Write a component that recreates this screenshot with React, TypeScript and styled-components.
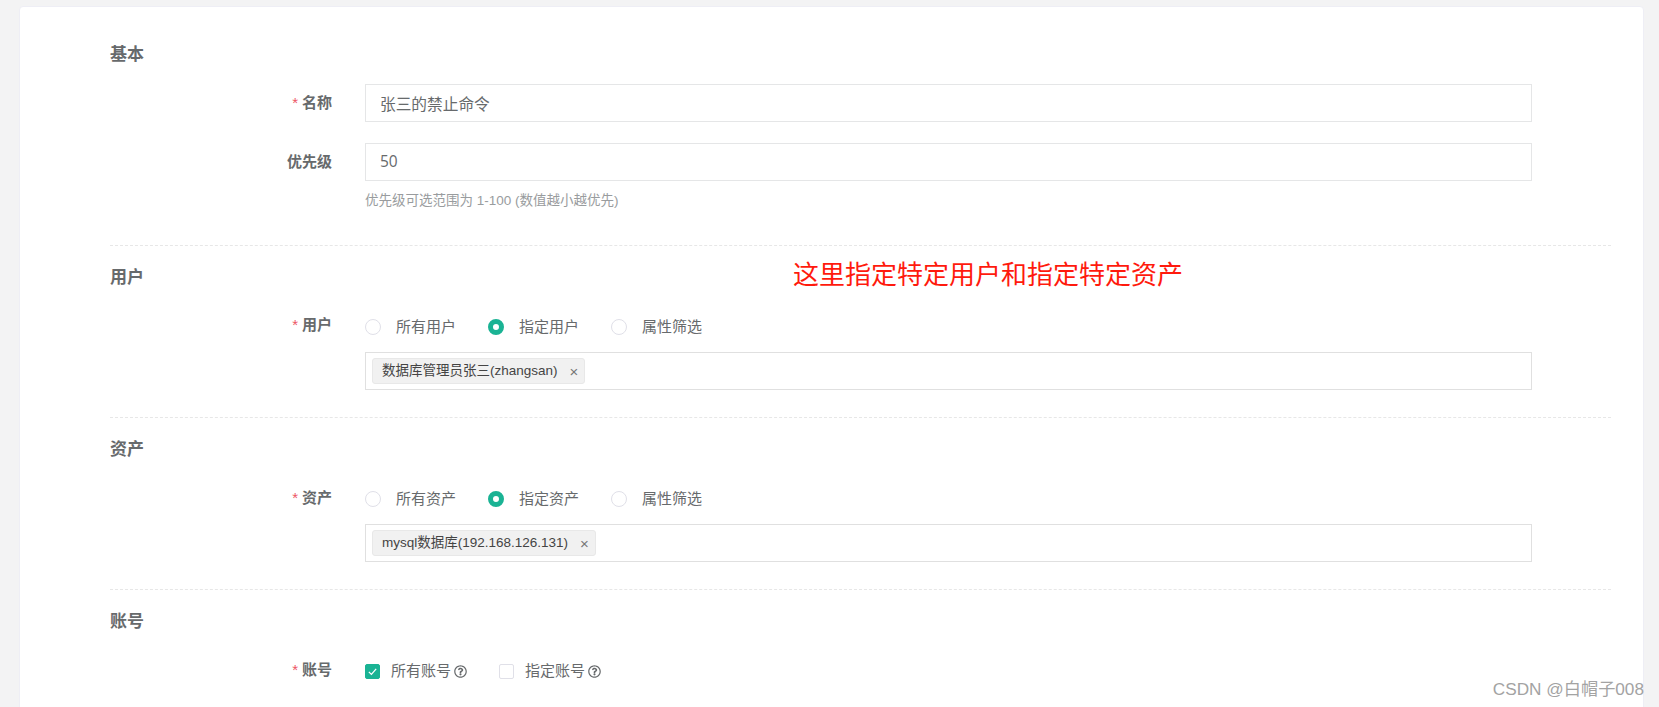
import React from "react";
import styled, { createGlobalStyle } from "styled-components";
import { FaRegQuestionCircle } from "react-icons/fa";

const GlobalStyle = createGlobalStyle`
  html, body {
    margin: 0;
    height: 707px;
    overflow: hidden;
    background: #f3f3f4;
    font-family: "Liberation Sans", "Noto Sans CJK SC", sans-serif;
  }
`;

const App = () => {
  return (
    <Page>
      <GlobalStyle />
      <Card>
        <Section>
          <SectionTitle>基本</SectionTitle>
          <Row>
            <Label>
              <Star>*</Star>名称
            </Label>
            <Input>张三的禁止命令</Input>
          </Row>
          <Row $gap>
            <Label>优先级</Label>
            <Input $latin>50</Input>
          </Row>
          <Row>
            <span />
            <Help>优先级可选范围为 1-100 (数值越小越优先)</Help>
          </Row>
        </Section>

        <Section>
          <SectionTitle>用户</SectionTitle>
          <Row>
            <Label $lift={3}>
              <Star>*</Star>用户
            </Label>
            <Options>
              <Radio>所有用户</Radio>
              <Radio $checked>指定用户</Radio>
              <Radio>属性筛选</Radio>
            </Options>
          </Row>
          <Row>
            <span />
            <TagInput>
              <Tag>
                数据库管理员张三(zhangsan)<TagClose>×</TagClose>
              </Tag>
            </TagInput>
          </Row>
        </Section>

        <Section>
          <SectionTitle>资产</SectionTitle>
          <Row>
            <Label $lift={2}>
              <Star>*</Star>资产
            </Label>
            <Options>
              <Radio>所有资产</Radio>
              <Radio $checked>指定资产</Radio>
              <Radio>属性筛选</Radio>
            </Options>
          </Row>
          <Row>
            <span />
            <TagInput>
              <Tag>
                mysql数据库(192.168.126.131)<TagClose>×</TagClose>
              </Tag>
            </TagInput>
          </Row>
        </Section>

        <LastSection>
          <SectionTitle>账号</SectionTitle>
          <Row>
            <Label $lift={2}>
              <Star>*</Star>账号
            </Label>
            <Options>
              <CheckItem>
                <CheckBox $checked>
                  <svg width="11" height="11" viewBox="0 0 12 12" fill="none">
                    <path d="M2 6.4 4.8 9.2 10 3.2" stroke="#fff" strokeWidth="1.4" />
                  </svg>
                </CheckBox>
                <OptionText>所有账号</OptionText>
                <HelpIcon size={13} />
              </CheckItem>
              <CheckItem>
                <CheckBox />
                <OptionText>指定账号</OptionText>
                <HelpIcon size={13} />
              </CheckItem>
            </Options>
          </Row>
        </LastSection>
      </Card>
      <Note>这里指定特定用户和指定特定资产</Note>
      <Watermark>CSDN @白帽子008</Watermark>
    </Page>
  );
};

export default App;

const Page = styled.div`
  position: relative;
  height: 707px;
  padding: 6px 15px 0 19px;
  box-sizing: border-box;
  overflow: hidden;
`;

const Card = styled.div`
  height: 760px;
  padding: 0 32px 0 90px;
  box-sizing: border-box;
  background: #fff;
  border: 1px solid #eeeef5;
  border-radius: 4px;
  color: #676a6c;
`;

const Section = styled.section`
  padding: 23px 0 27px;
  border-bottom: 1px dashed #e7e7e7;

  &:first-child {
    padding-top: 39px;
    padding-bottom: 26px;

    h3 {
      margin-bottom: 20px;
    }
  }
`;

const LastSection = styled.section`
  padding-top: 23px;
`;

const SectionTitle = styled.h3`
  margin: 0 0 22px;
  font-size: 17px;
  line-height: 18px;
  font-weight: 700;
  color: #676a6c;
`;

const Row = styled.div<{ $gap?: boolean }>`
  display: grid;
  grid-template-columns: 222px 1167px;
  column-gap: 33px;
  margin-top: ${(p) => (p.$gap ? "21px" : "0")};
`;

const Label = styled.label<{ $lift?: number }>`
  justify-self: end;
  font-size: 15px;
  font-weight: 700;
  line-height: 38px;
  margin-top: ${(p) => (p.$lift ? `-${p.$lift}px` : "0")};
  color: #676a6c;
`;

const Star = styled.span`
  margin-right: 4px;
  font-weight: 400;
  color: #ed5565;
`;

const Input = styled.div<{ $latin?: boolean }>`
  height: 38px;
  padding: 0 14px;
  box-sizing: border-box;
  border: 1px solid #e5e6e7;
  font-family: ${(p) =>
    p.$latin ? '"Open Sans", sans-serif' : '"Liberation Sans", "Noto Sans CJK SC", sans-serif'};
  font-size: ${(p) => (p.$latin ? "15.5px" : "15.7px")};
  line-height: ${(p) => (p.$latin ? "35px" : "39px")};
  color: #676a6c;
`;

const Help = styled.div`
  margin: 11px 0 9px;
  font-size: 13.5px;
  line-height: 18px;
  color: #999c9e;
`;

const Options = styled.div`
  display: flex;
  align-items: center;
  height: 38px;
  padding-bottom: 2px;
  box-sizing: border-box;
  gap: 32px;
`;

const OptionText = styled.span`
  margin-bottom: 4px;
`;

const RadioItem = styled.span`
  display: flex;
  align-items: center;
  gap: 15px;
  font-size: 15px;
`;

const RadioDot = styled.span<{ $checked?: boolean }>`
  width: 16px;
  height: 16px;
  box-sizing: border-box;
  border-radius: 50%;
  border: ${(p) => (p.$checked ? "5px solid #1ab394" : "1px solid #e0e0e8")};
  background: #fff;
`;

const Radio = ({ $checked, children }: { $checked?: boolean; children: React.ReactNode }) => (
  <RadioItem>
    <RadioDot $checked={$checked} />
    <OptionText>{children}</OptionText>
  </RadioItem>
);

const TagInput = styled.div`
  display: flex;
  align-items: center;
  height: 38px;
  margin-top: 5px;
  padding: 0 6px;
  box-sizing: border-box;
  border: 1px solid #e0e0e0;
`;

const Tag = styled.span`
  display: flex;
  align-items: center;
  height: 26px;
  padding: 0 6px 5px 9px;
  box-sizing: border-box;
  background: #f1f1f1;
  border: 1px solid #e8e8e8;
  border-radius: 3px;
  font-size: 13.5px;
  color: #444;
`;

const TagClose = styled.span`
  margin: 5px 0 0 12px;
  font-size: 15px;
  color: #777;
`;

const CheckItem = styled.span`
  display: flex;
  align-items: center;
  font-size: 15px;
`;

const HelpIcon = styled(FaRegQuestionCircle)`
  margin-left: 3px;
`;

const CheckBox = styled.span<{ $checked?: boolean }>`
  display: flex;
  align-items: center;
  justify-content: center;
  width: 15px;
  height: 15px;
  margin-right: 11px;
  box-sizing: border-box;
  border-radius: 2px;
  border: 1px solid ${(p) => (p.$checked ? "#1ab394" : "#e0e0e8")};
  background: ${(p) => (p.$checked ? "#1ab394" : "#fff")};
`;

const Note = styled.div`
  position: absolute;
  left: 793px;
  top: 257px;
  font-size: 26px;
  line-height: 36px;
  color: #ff1a0d;
  white-space: nowrap;
`;

const Watermark = styled.div`
  position: absolute;
  right: 15px;
  top: 679px;
  font-size: 17.2px;
  line-height: 20px;
  color: #a3a3a3;
  white-space: nowrap;
`;
